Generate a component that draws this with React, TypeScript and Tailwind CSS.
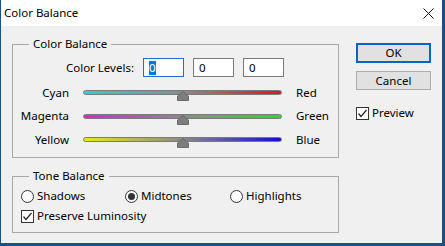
import React from "react";

const font = { fontFamily: '"Noto Sans", "Open Sans", sans-serif' };

function Slider({ left, right, from, to }: { left: string; right: string; from: string; to: string }) {
  return (
    <div className="flex items-center h-[23.5px]">
      <div className="w-[56px] text-right">{left}</div>
      <div className="relative ml-[14px] w-[199px] h-[5px]">
        <div
          className="absolute inset-0 rounded-full border border-[#7a7a7a]"
          style={{ background: `linear-gradient(to right, ${from}, #8a8a8a 50%, ${to})` }}
        />
        <svg className="absolute left-[94px] top-[1px]" width="12" height="10" viewBox="0 0 12 10">
          <path d="M6 0.5 L11.5 5 L11.5 9.5 L0.5 9.5 L0.5 5 Z" fill="#7d7d7d" stroke="#6a6a6a" />
        </svg>
      </div>
      <div className="ml-[14px]">{right}</div>
    </div>
  );
}

function Radio({ checked, label }: { checked?: boolean; label: string }) {
  return (
    <div className="flex items-center gap-[3px]">
      <div className="w-[13px] h-[13px] rounded-full border border-[#333] bg-white flex items-center justify-center">
        {checked && <div className="w-[7px] h-[7px] rounded-full bg-[#333]" />}
      </div>
      <span>{label}</span>
    </div>
  );
}

function Check({ label }: { label: string }) {
  return (
    <div className="flex items-center gap-[3px]">
      <div className="w-[13px] h-[13px] border border-[#333] bg-white flex items-center justify-center">
        <svg width="11" height="11" viewBox="0 0 11 11">
          <path d="M1.5 5.5 L4 8.5 L9.5 2" fill="none" stroke="#222" strokeWidth="1.2" />
        </svg>
      </div>
      <span>{label}</span>
    </div>
  );
}

export default function App() {
  return (
    <div className="w-[445px] h-[246px] bg-[#1d4f82] overflow-hidden text-[11.5px] text-black leading-[16px]" style={font}>
      <div className="ml-[1px] w-[441px] h-[243px] bg-[#f0f0f0] flex flex-col">
        <div className="h-[26px] bg-white flex items-center justify-between pl-[3px] pr-[8px] shrink-0 text-[11.5px]">
          <span>Color Balance</span>
          <svg width="11" height="11" viewBox="0 0 11 11">
            <path d="M0.5 0.5 L10.5 10.5 M10.5 0.5 L0.5 10.5" stroke="#111" strokeWidth="1" />
          </svg>
        </div>
        <div className="flex pl-[11px] pt-[10px]">
          <div className="w-[327px] flex flex-col gap-[10px]">
            <fieldset className="border border-[#a8a8a8] h-[122px] px-0">
              <legend className="ml-[16px] px-[4px] leading-[16px]">Color Balance</legend>
              <div className="flex items-center mt-[6px]">
                <div className="w-[121px] text-right">Color Levels:</div>
                <div className="ml-[9px] w-[41px] h-[19px] border border-[#2a6ad0] bg-white flex items-center pl-[5px]">
                  <span className="bg-[#0078d7] text-white leading-[14px]">0</span>
                </div>
                <div className="ml-[9px] w-[41px] h-[19px] border border-[#7a7a7a] bg-white flex items-center pl-[5px]">0</div>
                <div className="ml-[9px] w-[41px] h-[19px] border border-[#7a7a7a] bg-white flex items-center pl-[5px]">0</div>
              </div>
              <div className="mt-[4px]">
                <Slider left="Cyan" right="Red" from="#30d0d0" to="#e01818" />
                <Slider left="Magenta" right="Green" from="#e020e0" to="#20e020" />
                <Slider left="Yellow" right="Blue" from="#e8e820" to="#1010d0" />
              </div>
            </fieldset>
            <fieldset className="border border-[#a8a8a8] h-[65px] px-0">
              <legend className="ml-[16px] px-[4px] leading-[16px]">Tone Balance</legend>
              <div className="flex items-center pl-[8px] mt-[4px]">
                <div className="w-[104px]"><Radio label="Shadows" /></div>
                <div className="w-[105px]"><Radio checked label="Midtones" /></div>
                <Radio label="Highlights" />
              </div>
              <div className="pl-[8px] mt-[4px]">
                <Check label="Preserve Luminosity" />
              </div>
            </fieldset>
          </div>
          <div className="ml-[17px] pt-[7px] flex flex-col">
            <button className="w-[75px] h-[20px] border-2 border-[#0a64c8] bg-[#e1e1e1] leading-[14px]">OK</button>
            <button className="mt-[8px] w-[75px] h-[19px] border border-[#adadad] bg-[#e1e1e1] leading-[14px]">Cancel</button>
            <div className="mt-[15px]">
              <Check label="Preview" />
            </div>
          </div>
        </div>
      </div>
    </div>
  );
}
